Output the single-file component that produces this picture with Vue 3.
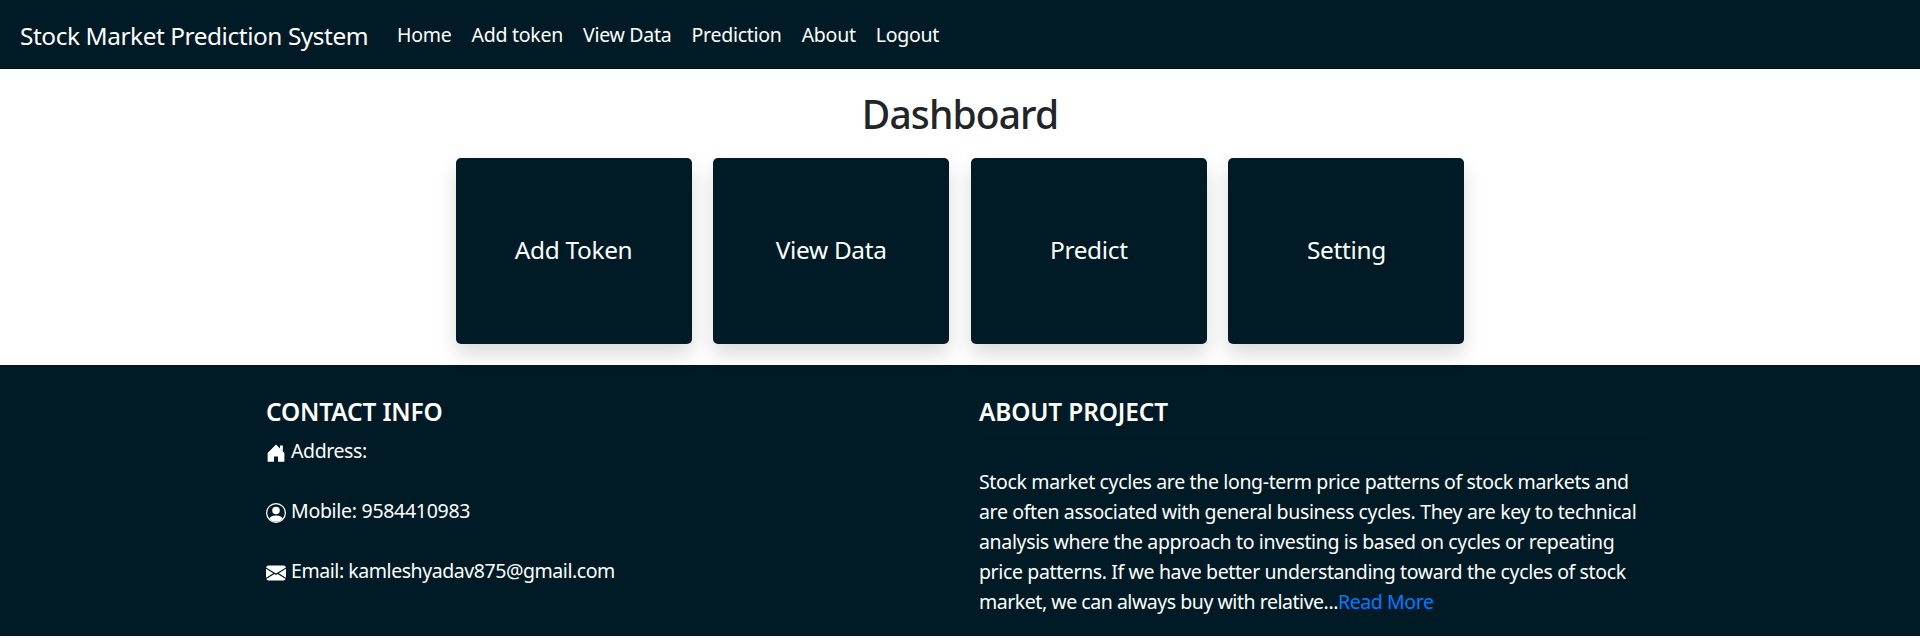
<script setup>
const links = [
  { text: 'Home', key: 'home' },
  { text: 'Add token', key: 'add' },
  { text: 'View Data', key: 'view' },
  { text: 'Prediction', key: 'prediction' },
  { text: 'About', key: 'about' },
  { text: 'Logout', key: 'logout' },
]
const cards = ['Add Token', 'View Data', 'Predict', 'Setting']
const about = [
  'Stock market cycles are the long-term price patterns of stock markets and',
  'are often associated with general business cycles. They are key to technical',
  'analysis where the approach to investing is based on cycles or repeating',
  'price patterns. If we have better understanding toward the cycles of stock',
]
</script>

<template>
  <div class="page">
    <nav class="navbar">
      <a class="brand">Stock Market Prediction System</a>
      <a v-for="l in links" :key="l.key" class="link" :class="l.key">{{ l.text }}</a>
    </nav>
    <main class="main">
      <h1 class="title">Dashboard</h1>
      <div class="cards">
        <a v-for="c in cards" :key="c" class="card">{{ c }}</a>
      </div>
    </main>
    <footer class="footer">
      <section class="col">
        <h4 class="heading">CONTACT INFO</h4>
        <p class="contact">
          <svg class="icon" viewBox="0 0 16 16" fill="currentColor"><path d="M8 1.200 1.300 7.900V14.500a.5.5 0 0 0 .5.5h4.600v-4.300h3.200V15h4.600a.5.5 0 0 0 .5-.5V7.900z" /><path d="M11.200 2h2.300v4.700l-2.300-2.300z" /></svg>
          <span class="address">Address:</span>
        </p>
        <p class="contact">
          <svg class="icon" viewBox="0 0 16 16" fill="currentColor"><path d="M13.468 12.370C12.758 11.226 11.195 10 8 10s-4.757 1.225-5.468 2.370A6.987 6.987 0 0 0 8 15a6.987 6.987 0 0 0 5.468-2.630z" /><path fill-rule="evenodd" d="M8 9a3 3 0 1 0 0-6 3 3 0 0 0 0 6z" /><path fill-rule="evenodd" d="M8 1a7 7 0 1 0 0 14A7 7 0 0 0 8 1zM0 8a8 8 0 1 1 16 0A8 8 0 0 1 0 8z" /></svg>
          <span class="mobile">Mobile: 9584410983</span>
        </p>
        <p class="contact">
          <svg class="icon" viewBox="0 0 16 16" fill="currentColor"><path fill-rule="evenodd" d="M.05 3.555A2 2 0 0 1 2 2h12a2 2 0 0 1 1.950 1.555L8 8.414.05 3.555zM0 4.697v7.104l5.803-3.558L0 4.697zM6.761 8.830l-6.570 4.027A2 2 0 0 0 2 14h12a2 2 0 0 0 1.808-1.144l-6.570-4.027L8 9.586l-1.239-.757zm3.436-.586L16 11.801V4.697l-5.803 3.546z" /></svg>
          <span class="email">Email: kamleshyadav875@gmail.com</span>
        </p>
      </section>
      <section class="col">
        <h4 class="heading">ABOUT PROJECT</h4>
        <hr class="rule" />
        <p class="about-text">
          <span v-for="(t, i) in about" :key="i" class="line" :class="'line' + i">{{ t }}</span>
          <span class="line line4">market, we can always buy with relative...<a class="more">Read More</a></span>
        </p>
      </section>
    </footer>
  </div>
</template>

<style>
body { margin: 0; background: #fff; }
</style>

<style scoped>
.page { font-family: "Noto Sans", "Open Sans", sans-serif; font-size: 19.5px; line-height: 30px; letter-spacing: -0.4px; color: #fff; }
.navbar { box-sizing: border-box; height: 69px; padding: 1px 20px 0; background: #011b26; border-bottom: 1px solid #001620; display: flex; align-items: center; white-space: nowrap; }
.brand { font-size: 24.4px; width: 347px; margin-right: 30px; line-height: 37px; letter-spacing: -0.43px; padding-top: 1px; }
.link { margin-right: 20px; letter-spacing: -0.26px; }
.main { height: 296px; display: flex; flex-direction: column; align-items: center; }
.title { margin: 21px 0 20px; font-size: 39px; line-height: 48px; font-weight: 530; color: #212529; letter-spacing: -0.9px; }
.cards { display: grid; grid-template-columns: repeat(4, 235.8px); gap: 21.8px; }
.card { height: 186px; background: #011b26; border-radius: 5px; box-shadow: 0 10px 20px rgba(0, 0, 0, .15); display: flex; align-items: center; justify-content: center; font-size: 24.4px; letter-spacing: -0.32px; box-sizing: border-box; padding-bottom: 2px; }
.footer { box-sizing: border-box; height: 271px; padding: 30px 266px 0; background: #011b26; display: grid; grid-template-columns: 713px 675px; }
.heading { margin: 0; font-size: 24.4px; line-height: 34px; font-weight: 600; height: 41px; letter-spacing: -0.13px; }
.contact { margin: 0 0 30px; height: 30px; display: flex; align-items: center; gap: 5px; }
.icon { width: 20px; height: 20px; margin-top: 4px; }
.mobile { letter-spacing: -0.29px; }
.email { letter-spacing: -0.44px; }
.rule { border: 0; height: 1px; margin: 3px 0 27px; background: #001620; }
.about-text { margin: 0; }
.line { display: block; white-space: nowrap; letter-spacing: -0.35px; }
.line3 { letter-spacing: -0.37px; }
.line4 { letter-spacing: -0.46px; }
.more { color: #007bff; letter-spacing: -0.4px; }
</style>
